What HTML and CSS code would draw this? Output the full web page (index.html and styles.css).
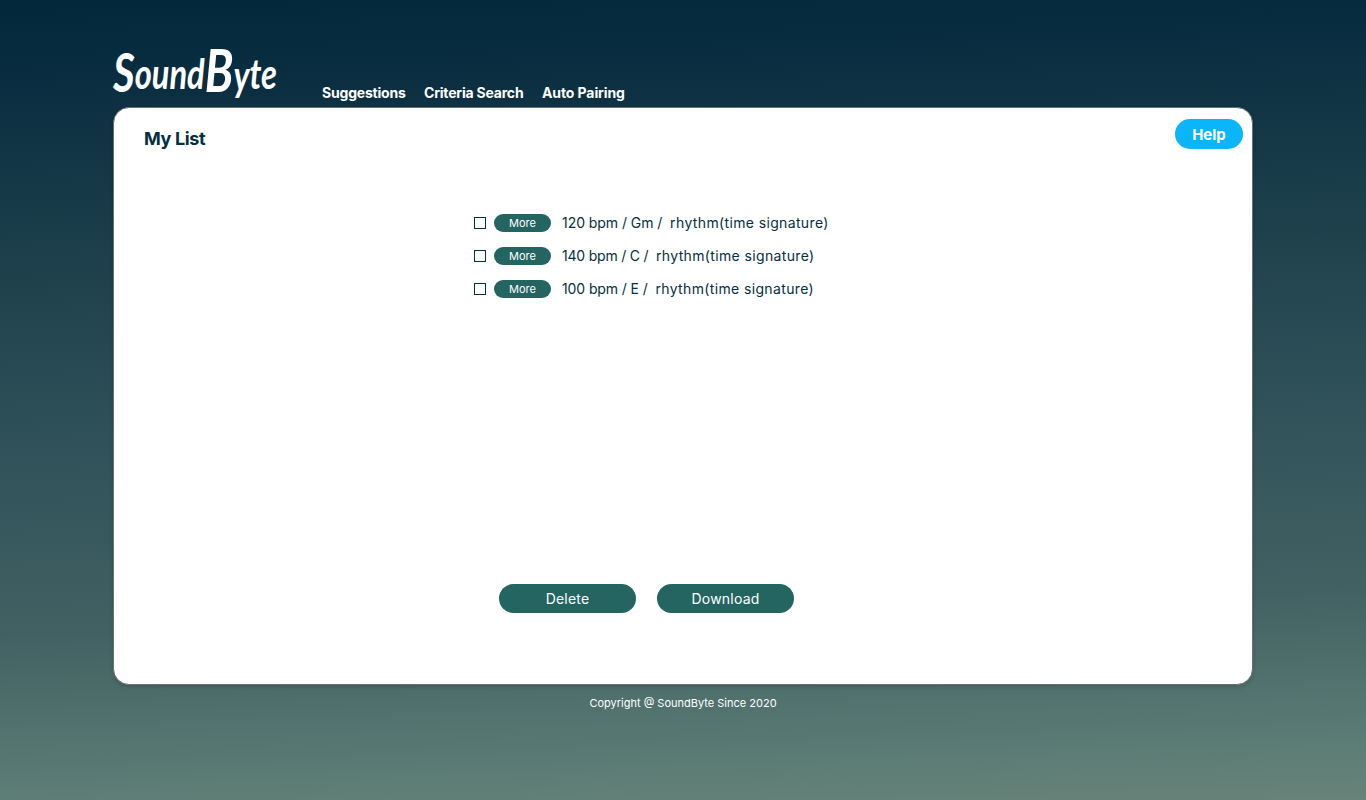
FILE: index.html
```html
<!DOCTYPE html>
<html lang="en">
<head>
<meta charset="utf-8">
<title>SoundByte</title>
<link rel="stylesheet" href="styles.css">
</head>
<body>
<div class="page">
  <header class="header">
    <svg class="logo" width="170" height="64" viewBox="0 0 170 64" role="img" aria-label="SoundByte">
      <text class="logo-text" y="51" textLength="164" lengthAdjust="spacingAndGlyphs"><tspan font-size="54">S</tspan><tspan font-size="42" dy="-3">ound</tspan><tspan font-size="60" dy="3">B</tspan><tspan font-size="42" dy="-1">y</tspan><tspan font-size="42" dy="-2">te</tspan></text>
    </svg>
    <nav class="nav">
      <a class="nav-one">Suggestions</a>
      <a class="nav-two">Criteria Search</a>
      <a class="nav-three">Auto Pairing</a>
    </nav>
  </header>
  <main class="card">
    <div class="card-top">
      <h1 class="title">My List</h1>
      <button class="help">Help</button>
    </div>
    <ul class="list">
      <li class="row"><span class="check"></span><button class="more">More</button><span class="label label-one">120 bpm / Gm /&nbsp; <span class="rhythm">rhythm(time signature)</span></span></li>
      <li class="row"><span class="check"></span><button class="more">More</button><span class="label label-two">140 bpm / C /&nbsp; <span class="rhythm">rhythm(time signature)</span></span></li>
      <li class="row"><span class="check"></span><button class="more">More</button><span class="label">100 bpm / E /&nbsp; <span class="rhythm">rhythm(time signature)</span></span></li>
    </ul>
    <div class="actions">
      <button class="action">Delete</button>
      <button class="action">Download</button>
    </div>
  </main>
  <footer class="footer"><span>Copyright @ SoundByte Since 2020</span></footer>
</div>
</body>
</html>
```
FILE: styles.css
```css
* { box-sizing: border-box; }
body {
  margin: 0;
  height: 800px;
  overflow: hidden;
  font-family: Inter, "Open Sans", sans-serif;
  color: #04303f;
  background: linear-gradient(178deg, #02273b 0%, #062a3e 5%, #173b48 25%, #2e5058 51%, #426163 75%, #5a7b74 92%, #688379 100%);
}
button { border: 0; padding: 0; font-family: inherit; color: #fff; }
.page { width: 1140px; margin: 0 auto; }
.header { height: 107px; display: flex; align-items: flex-end; }
.logo { display: block; margin-bottom: 2px; overflow: visible; }
.logo-text { fill: #fff; font-family: Lato, sans-serif; font-style: italic; font-weight: 700; }
.nav { display: flex; gap: 18px; margin: 0 0 4px 39px; color: #fff; font-size: 14px; font-weight: 700; line-height: 20px; white-space: nowrap; }
.nav-one { width: 84px; letter-spacing: -0.2px; }
.nav-two { width: 100px; letter-spacing: -0.2px; }
.nav-three { width: 84px; letter-spacing: -0.1px; }
.card {
  height: 578px;
  border: 1px solid #69706f;
  border-radius: 16px;
  background: #fff;
  box-shadow: 0 2px 4px rgba(0, 0, 0, .16);
}
.card-top { height: 106px; display: flex; justify-content: space-between; padding: 11px 9px 0 30px; }
.title { margin: 8px 0 0; font-size: 18px; line-height: 24px; letter-spacing: -0.35px; }
.help { width: 68px; height: 30px; border-radius: 15px; background: #0ab5fa; font-size: 15px; font-weight: 700; }
.list { list-style: none; margin: 0 0 0 360px; padding: 0; height: 370px; display: flex; flex-direction: column; gap: 15px; }
.row { height: 18px; display: flex; align-items: center; }
.check { width: 12px; height: 12px; border: 1px solid #04303f; }
.more { width: 57px; height: 18px; margin: 0 11px 0 8px; border-radius: 9px; background: #246562; font-size: 11px; line-height: 18px; }
.label { font-size: 14px; line-height: 18px; white-space: nowrap; letter-spacing: -0.1px; }
.label-one { letter-spacing: -0.05px; }
.label-two { letter-spacing: -0.2px; }
.rhythm { letter-spacing: 0.36px; }
.actions { display: flex; gap: 21px; padding-left: 385px; }
.action { width: 137px; height: 29px; border-radius: 15px; background: #246562; font-size: 14px; letter-spacing: 0.2px; }
.footer { margin-top: 10px; text-align: center; font-size: 11px; line-height: 16px; color: #fff; }
```
